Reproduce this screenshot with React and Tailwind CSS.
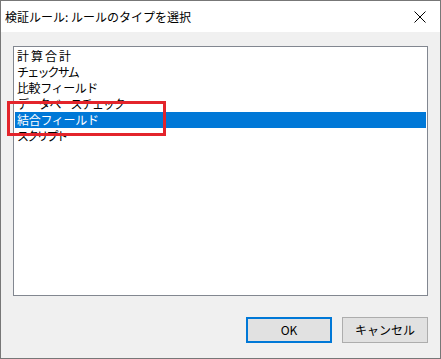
import React from 'react';

const items = [
  { label: '計算合計', cls: 'tracking-[2px]' },
  { label: 'チェックサム', cls: 'tracking-[-1.8px]' },
  { label: '比較フィールド', cls: 'tracking-[-0.4px]' },
  { label: 'データベースチェック', cls: 'tracking-[-1.2px]' },
  { label: '結合フィールド', cls: 'tracking-[-0.3px]' },
  { label: 'スクリプト', cls: 'tracking-[-2.2px]' },
];

const font = { fontFamily: '"Noto Sans CJK JP", "Noto Sans", sans-serif' };

export default function App() {
  const selected = 4;

  return (
    <div className="w-[441px] h-[359px] bg-[#f0f0f0] border border-[#777777] flex flex-col relative" style={font}>
      {/* title bar */}
      <div className="h-[31px] bg-white flex items-center justify-between pl-[4px] pr-[14px]">
        <span className="text-[12px] leading-[16px] text-black">検証ルール: ルールのタイプを選択</span>
        <svg width="12" height="12" viewBox="0 0 12 12" className="text-black">
          <path d="M0.5 0.5 L11.5 11.5 M11.5 0.5 L0.5 11.5" stroke="currentColor" strokeWidth="1" fill="none" />
        </svg>
      </div>

      {/* body */}
      <div className="flex-1 flex flex-col px-[12px] pt-[14px] pb-[15px]">
        <div className="h-[250px] bg-white border border-[#828790] pl-px pt-px flex flex-col">
          {items.map((item, i) => (
            <div
              key={item.label}
              className={`h-[16px] leading-[16px] text-[12px] pl-[2px] mr-px whitespace-nowrap ${item.cls} ${i === selected ? 'bg-[#0078d7] text-white' : 'text-black'}`}
            >
              {item.label}
            </div>
          ))}
        </div>

        <div className="flex justify-end gap-[10px] mt-[21px]">
          <button className="w-[86px] h-[26px] bg-[#e1e1e1] border-2 border-[#0078d7] text-[12px] text-black leading-none">
            OK
          </button>
          <button className="w-[86px] h-[26px] bg-[#e1e1e1] border border-[#adadad] text-[12px] text-black leading-none">
            キャンセル
          </button>
        </div>
      </div>

      {/* red annotation box over the list */}
      <div className="absolute left-[6px] top-[100px] w-[159px] h-[35px] border-[3px] border-[#e3242b] pointer-events-none" />
    </div>
  );
}
